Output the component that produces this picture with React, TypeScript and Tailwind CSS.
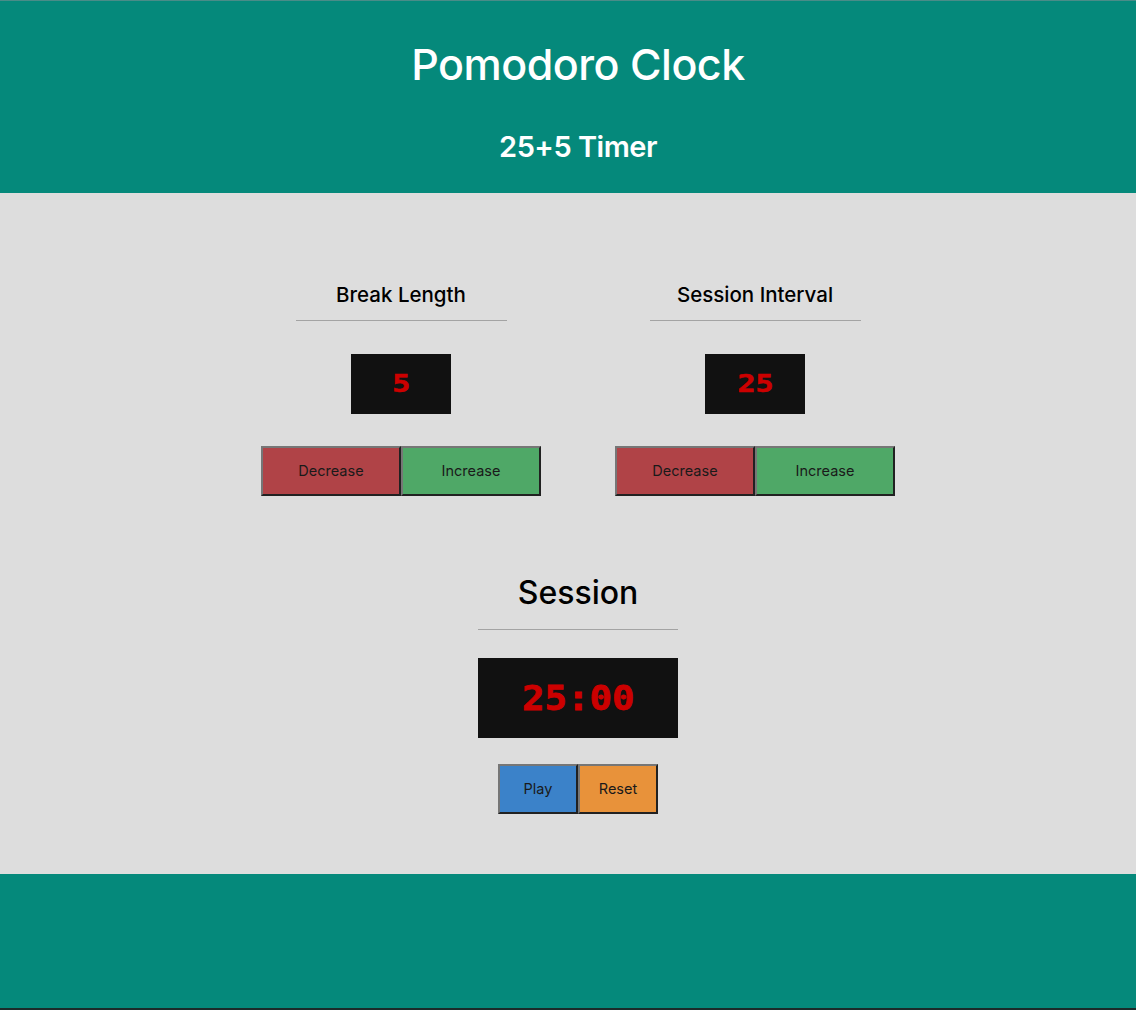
import React from "react";

const btn =
  "h-[50px] text-[14.5px] text-[#1a1a1a] border-2 [border-style:outset] border-[#767676] flex items-center justify-center";

function Control({ title, value, idPrefix }: { title: string; value: string; idPrefix: string }) {
  return (
    <div className="flex flex-col items-center w-[280px]" id={idPrefix}>
      <div className="h-[30px] leading-[30px] text-[20.5px] font-medium text-black">{title}</div>
      <div className="mt-[10px] w-[211px] h-px bg-[#a3a3a3]" />
      <div className="mt-[33px] w-[100px] h-[60px] bg-[#111111] flex items-center justify-center">
        <span className="text-[#cc0000] text-[24px] font-bold [font-family:'DejaVu_Sans_Mono',monospace] scale-x-[1.25] [-webkit-text-stroke:0.6px_#cc0000]">
          {value}
        </span>
      </div>
      <div className="mt-[32px] flex">
        <button className={`${btn} w-[140px] bg-[#b04347]`}>Decrease</button>
        <button className={`${btn} w-[140px] bg-[#4fa867]`}>Increase</button>
      </div>
    </div>
  );
}

export default function App() {
  return (
    <div className="w-full min-h-[1010px] flex flex-col [font-family:'Inter','Noto_Sans',sans-serif]">
      <header className="h-[193px] bg-[#05897b] border-t border-[#4a8c88] flex flex-col items-center text-white pl-[20px]">
        <h1 className="mt-[37px] h-[52px] leading-[52px] text-[43px] font-medium tracking-[-0.5px]">Pomodoro Clock</h1>
        <h2 className="mt-[37px] h-[40px] leading-[40px] text-[29px] font-semibold tracking-[-0.5px]">25+5 Timer</h2>
      </header>
      <main className="bg-[#dddddd] flex flex-col items-center pt-[87px] pb-[60px] pl-[20px]">
        <div className="flex gap-[74px]">
          <Control title="Break Length" value="5" idPrefix="break" />
          <Control title="Session Interval" value="25" idPrefix="session" />
        </div>
        <div className="mt-[73px] h-[48px] leading-[48px] text-[32px] font-medium text-black">Session</div>
        <div className="mt-[12px] w-[200px] h-px bg-[#a3a3a3]" />
        <div className="mt-[28px] w-[200px] h-[80px] bg-[#111111] flex items-center justify-center">
          <span className="text-[#cc0000] text-[34px] font-bold [font-family:'DejaVu_Sans_Mono',monospace] scale-x-[1.1] [-webkit-text-stroke:0.8px_#cc0000]">
            25:00
          </span>
        </div>
        <div className="mt-[26px] flex">
          <button className={`${btn} w-[80px] bg-[#3b82c9]`}>Play</button>
          <button className={`${btn} w-[80px] bg-[#e8923a]`}>Reset</button>
        </div>
      </main>
      <footer className="h-[134px] bg-[#05897b]" />
      <div className="h-[2px] bg-[#1b2b2a]" />
    </div>
  );
}
